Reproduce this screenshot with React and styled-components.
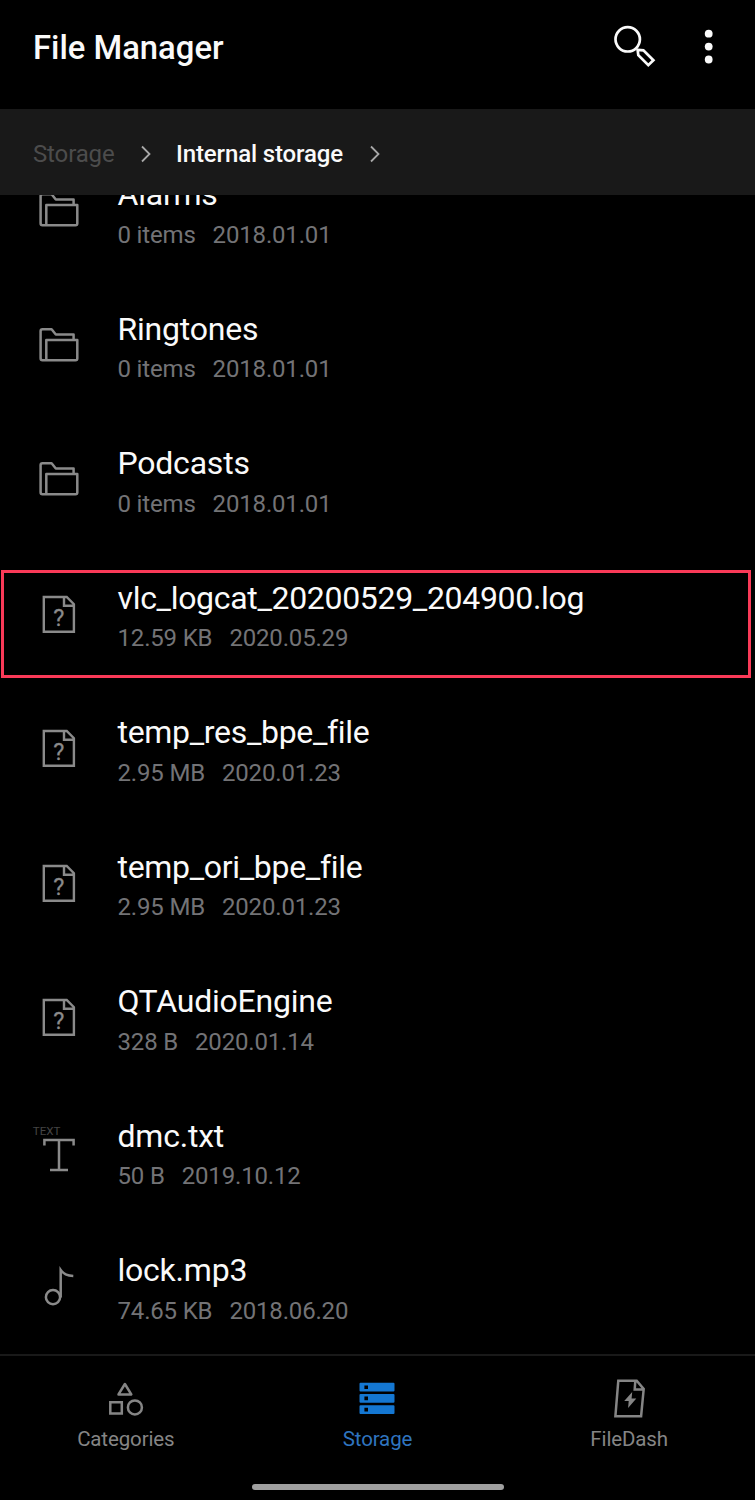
import React from "react";
import styled, { createGlobalStyle } from "styled-components";

const GlobalStyle = createGlobalStyle`
  * { box-sizing: border-box; }
  body { margin: 0; background: #000; font-family: Roboto, "Liberation Sans", sans-serif; }
`;

const Screen = styled.div`
  display: flex;
  flex-direction: column;
  width: 755px;
  height: 1500px;
  background: #000;
  color: #fff;
  overflow: hidden;
`;

const Header = styled.header`
  display: flex;
  align-items: flex-start;
  justify-content: space-between;
  flex: none;
  height: 109px;
  padding: 22px 22px 0 33px;
`;

const Title = styled.h1`
  margin: 6px 0 0;
  font-size: 32.8px;
  line-height: 40px;
  font-weight: 500;
  color: #fafafa;
`;

const Actions = styled.div`
  display: flex;
  gap: 26px;
`;

const IconButton = styled.button`
  display: flex;
  width: 48px;
  height: 48px;
  padding: 0;
  border: 0;
  background: none;
  color: #fafafa;
`;

const Breadcrumb = styled.nav`
  position: relative;
  z-index: 1;
  display: flex;
  align-items: center;
  flex: none;
  height: 86px;
  padding: 3px 33px 0 33px;
  background: #191919;
  font-size: 24px;
  line-height: 30px;
  letter-spacing: -0.13px;
`;

const Crumb = styled.span`
  color: ${(p) => (p.$current ? "#fafafa" : "#4c4c4c")};
  font-weight: ${(p) => (p.$current ? 500 : 400)};
`;

const Chevron = styled.svg`
  width: 12px;
  height: 18px;
  margin: 0 24px 0 25.5px;
`;

const List = styled.ul`
  flex: 1;
  min-height: 0;
  margin: 0;
  padding: 0;
  overflow: hidden;
  list-style: none;
`;

const Row = styled.li`
  position: relative;
  display: flex;
  gap: 34.5px;
  height: 134.5px;
  padding: 6.4px 0 0 35px;

  &:first-child {
    margin-top: -27px;
  }
`;

const Highlight = styled.div`
  position: absolute;
  top: -1.5px;
  left: 1px;
  width: 750px;
  height: 108px;
  border: 3px solid #fa3a58;
`;

const FileIcon = styled.svg`
  flex: none;
  width: 48px;
  height: 48px;
  margin-top: 11px;
  overflow: visible;
  color: #8a8a8a;
`;

const Name = styled.div`
  font-size: 32px;
  line-height: 40px;
  letter-spacing: ${(p) => (p.$tight ? "-0.32px" : "-0.22px")};
  color: #fafafa;
`;

const Meta = styled.div`
  display: flex;
  gap: 17px;
  margin-top: 6.5px;
  font-size: 24px;
  line-height: 28px;
  letter-spacing: -0.17px;
  color: #737376;
`;

const TabBar = styled.nav`
  display: grid;
  grid-template-columns: repeat(3, 1fr);
  flex: none;
  height: 130px;
  padding-top: 18px;
  border-top: 2px solid #191919;
`;

const Tab = styled.a`
  display: flex;
  flex-direction: column;
  align-items: center;
  font-size: 20.5px;
  line-height: 26px;
  letter-spacing: -0.13px;
  color: ${(p) => (p.$active ? "#2f74bf" : "#858585")};
`;

const TabIcon = styled.svg`
  width: 48px;
  height: 48px;
  margin-bottom: 4px;
`;

const HomeBar = styled.div`
  flex: none;
  width: 252px;
  height: 6px;
  margin: 0 auto 10px;
  border-radius: 3px;
  background: #a0a0a0;
`;

const line = { fill: "none", stroke: "currentColor", strokeWidth: 2.5, strokeLinejoin: "round" };

const glyphs = {
  folder: (
    <g {...line}>
      <path d="M38.6 19.5V14.5H20.8L16.6 9.2H7.5Q5.6 9.2 5.6 11V38.3Q5.6 40.3 7.5 40.3H40.5Q42.3 40.3 42.3 38.5V20H11.3V40" />
    </g>
  ),
  unknown: (
    <>
      <path {...line} strokeLinejoin="miter" strokeWidth="2.4" d="M31.7 8H8.8V42.8H38.9V15.2ZM29 8V16.8H39" />
      <text x="23.9" y="37" textAnchor="middle" fontSize="23.5" fontFamily="Roboto" fill="currentColor" stroke="currentColor" strokeWidth="0.3">?</text>
    </>
  ),
  text: (
    <>
      <text x="-2.2" y="8.3" fontSize="11.6" fontFamily="Roboto" fill="#444">TEXT</text>
      <path {...line} strokeLinejoin="miter" d="M9.4 18.5V13H38.6V18.5M24 13V43M15 43H33" />
    </>
  ),
  music: (
    <g {...line} strokeLinejoin="miter">
      <circle cx="18" cy="36.2" r="7.1" />
      <path d="M25.7 36.5V9Q29.5 14.6 38.3 15" />
    </g>
  ),
};

const files = [
  { icon: "folder", name: "Alarms", size: "0 items", date: "2018.01.01" },
  { icon: "folder", name: "Ringtones", size: "0 items", date: "2018.01.01" },
  { icon: "folder", name: "Podcasts", size: "0 items", date: "2018.01.01" },
  { icon: "unknown", name: "vlc_logcat_20200529_204900.log", size: "12.59 KB", date: "2020.05.29", marked: true },
  { icon: "unknown", name: "temp_res_bpe_file", size: "2.95 MB", date: "2020.01.23" },
  { icon: "unknown", name: "temp_ori_bpe_file", size: "2.95 MB", date: "2020.01.23" },
  { icon: "unknown", name: "QTAudioEngine", size: "328 B", date: "2020.01.14" },
  { icon: "text", name: "dmc.txt", size: "50 B", date: "2019.10.12" },
  { icon: "music", name: "lock.mp3", size: "74.65 KB", date: "2018.06.20" },
];

const Separator = () => (
  <Chevron viewBox="0 0 12 18">
    <path d="M2 1.5L9.5 9L2 16.5" fill="none" stroke="#a8a8a8" strokeWidth="1.8" />
  </Chevron>
);

const diskUnit =
  "M7.5 8.8H40.5Q41.5 8.8 41.5 9.8V16.5Q41.5 17.5 40.5 17.5H7.5Q6.5 17.5 6.5 16.5V9.8Q6.5 8.8 7.5 8.8ZM11.4 11.4V15H15V11.4Z";

export default function App() {
  return (
    <Screen>
      <GlobalStyle />
      <Header>
        <Title>File Manager</Title>
        <Actions>
          <IconButton aria-label="Search">
            <svg width="48" height="48" viewBox="0 0 48 48" fill="none" stroke="currentColor" strokeWidth="2.7">
              <circle cx="16.7" cy="17.3" r="12.2" />
              <path d="M26.6 27.8L32.4 28.4L42.4 38.2L37.3 43.2L27.3 33.2Z" />
            </svg>
          </IconButton>
          <IconButton aria-label="More">
            <svg width="48" height="48" viewBox="0 0 48 48" fill="currentColor">
              <circle cx="23.7" cy="11.7" r="3.9" />
              <circle cx="23.7" cy="24.6" r="3.9" />
              <circle cx="23.7" cy="37.5" r="3.9" />
            </svg>
          </IconButton>
        </Actions>
      </Header>
      <Breadcrumb>
        <Crumb>Storage</Crumb>
        <Separator />
        <Crumb $current>Internal storage</Crumb>
        <Separator />
      </Breadcrumb>
      <List>
        {files.map((f) => (
          <Row key={f.name}>
            <FileIcon viewBox="0 0 48 48">{glyphs[f.icon]}</FileIcon>
            <div>
              <Name $tight={f.name.includes("_")}>{f.name}</Name>
              <Meta>
                <span>{f.size}</span>
                <span>{f.date}</span>
              </Meta>
            </div>
            {f.marked && <Highlight />}
          </Row>
        ))}
      </List>
      <TabBar>
        <Tab>
          <TabIcon viewBox="0 0 48 48" {...line}>
            <path d="M22.9 10L29.3 20.4H16.5Z" />
            <path strokeLinejoin="miter" d="M8.3 28.2H19.8V39.4H8.3Z" />
            <circle cx="32.9" cy="33.4" r="7" />
          </TabIcon>
          Categories
        </Tab>
        <Tab $active>
          <TabIcon viewBox="0 0 48 48" fill="#1477d2" fillRule="evenodd">
            <path d={diskUnit} />
            <path transform="translate(0 11.2)" d={diskUnit} />
            <path transform="translate(0 22.4)" d={diskUnit} />
          </TabIcon>
          Storage
        </Tab>
        <Tab>
          <TabIcon viewBox="0 0 48 48" {...line} strokeLinejoin="miter">
            <path d="M13.3 6.7H31.7L38.7 15L36.1 42.2H10.4ZM30.3 7L29.7 15.4H38.2" />
            <path d="M27.2 18L19.2 27H23.7L23.1 34L31.3 24.6H26.6Z" fill="currentColor" stroke="none" />
          </TabIcon>
          FileDash
        </Tab>
      </TabBar>
      <HomeBar />
    </Screen>
  );
}
